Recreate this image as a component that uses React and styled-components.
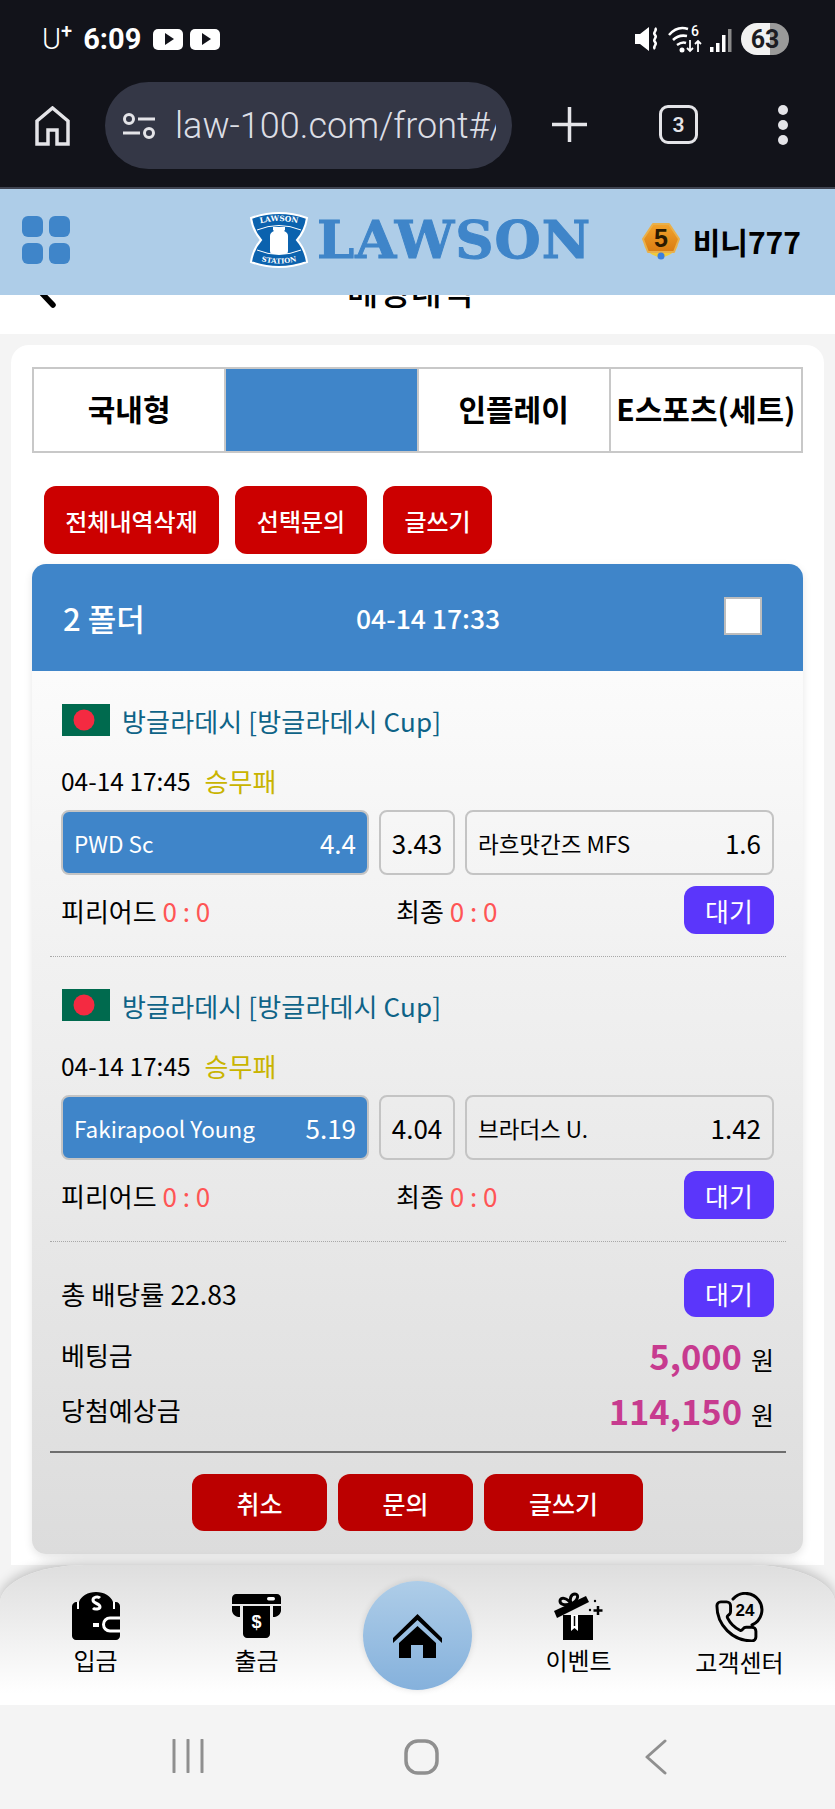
import React from 'react';
import styled, { createGlobalStyle } from 'styled-components';

const GlobalStyle = createGlobalStyle`
  html, body {
    margin: 0;
    padding: 0;
    background: #f4f4f4;
  }
  * { box-sizing: border-box; }
  body {
    font-family: "Noto Sans CJK KR", "Noto Sans", sans-serif;
    color: #000;
  }
`;

const Phone = styled.div`
  width: 835px;
  height: 1809px;
  display: flex;
  flex-direction: column;
  overflow: hidden;
`;

/* android + browser chrome */
const Chrome = styled.div`
  height: 189px;
  flex: none;
  background: #12131a;
  border-bottom: 2px solid #3f4350;
  position: relative;
  z-index: 3;
`;

const StatusBar = styled.div`
  height: 78px;
  padding: 0 46px 0 42px;
  display: flex;
  align-items: center;
  color: #fff;
`;

const Carrier = styled.span`
  font-family: "Roboto", sans-serif;
  font-size: 29px;
  font-weight: 300;
  margin-right: 11px;
  sup { font-size: 20px; line-height: 0; font-weight: 500; vertical-align: 11px; }
`;

const Clock = styled.span`
  font-family: "Roboto", sans-serif;
  font-size: 29px;
  font-weight: 700;
  margin-right: 12px;
`;

const PlayBadge = styled.div`
  width: 30px;
  height: 21px;
  border-radius: 5px;
  background: #fff;
  margin-right: 7px;
  display: flex;
  align-items: center;
  justify-content: center;
  &::after {
    content: '';
    border-left: 9px solid #12131a;
    border-top: 6px solid transparent;
    border-bottom: 6px solid transparent;
    margin-left: 2px;
  }
`;

const StatusRight = styled.div`
  margin-left: auto;
  display: flex;
  align-items: center;
  gap: 8px;
`;

const Battery = styled.div`
  width: 48px;
  height: 32px;
  border-radius: 16px;
  background: linear-gradient(90deg, #f1f1f1 0 60%, #9a9a9a 60%);
  color: #1c1c22;
  font-family: "Roboto", sans-serif;
  font-size: 25px;
  font-weight: 700;
  display: flex;
  align-items: center;
  justify-content: center;
`;

const BrowserBar = styled.div`
  height: 91px;
  padding: 4px 0 0 35px;
  display: flex;
  align-items: flex-start;
`;

const UrlBar = styled.div`
  width: 407px;
  height: 87px;
  margin-left: 35px;
  padding: 0 16px 0 17px;
  border-radius: 44px;
  background: #343746;
  display: flex;
  align-items: center;
  gap: 19px;
`;

const UrlText = styled.div`
  flex: 1;
  overflow: hidden;
  white-space: nowrap;
  font-family: "Roboto", sans-serif;
  font-size: 36px;
  font-weight: 300;
  color: #dcdee5;
`;

const BarIcon = styled.svg`
  flex: none;
  display: block;
  margin-top: ${p => p.$top}px;
  margin-left: ${p => p.$left}px;
`;

const TabCount = styled.div`
  width: 39px;
  height: 39px;
  margin: 23px 0 0 72px;
  border: 3px solid #e4e4e8;
  border-radius: 9px;
  color: #e4e4e8;
  font-family: "Roboto", sans-serif;
  font-size: 21px;
  font-weight: 600;
  display: flex;
  align-items: center;
  justify-content: center;
`;

const Dots = styled.div`
  margin: 23px 0 0 80px;
  display: flex;
  flex-direction: column;
  gap: 5px;
  span {
    width: 10px;
    height: 10px;
    border-radius: 50%;
    background: #e4e4e8;
  }
`;

/* site header */
const Header = styled.header`
  height: 106px;
  flex: none;
  background: #aecde8;
  position: relative;
  z-index: 2;
  display: flex;
  align-items: center;
  padding: 0 34px 0 22px;
`;

const MenuGrid = styled.div`
  display: grid;
  grid-template-columns: 21px 21px;
  grid-auto-rows: 21px;
  gap: 6px;
  margin-top: -5px;
  span {
    background: #3f85c9;
    border-radius: 6px;
  }
`;

const Logo = styled.div`
  display: flex;
  align-items: center;
  gap: 8px;
  margin-left: 179px;
  margin-top: -5px;
`;

const LogoWord = styled.span`
  font-family: "DejaVu Serif", serif;
  font-size: 53px;
  font-weight: 700;
  line-height: 1;
  letter-spacing: 1px;
  color: #3f85c9;
  -webkit-text-stroke: 1px #3f85c9;
`;

const UserBox = styled.div`
  margin-left: auto;
  display: flex;
  align-items: center;
  gap: 13px;
  margin-top: -3px;
`;

const UserName = styled.span`
  font-size: 30px;
  font-weight: 700;
  white-space: nowrap;
`;

/* scrolled page */
const Main = styled.main`
  flex: 1;
  min-height: 0;
  overflow: hidden;
`;

const TitleRow = styled.div`
  height: 70px;
  margin-top: -31px;
  padding: 0 0 16px 32px;
  background: #fff;
  display: flex;
  align-items: center;
`;

const BackIcon = styled.svg`
  flex: none;
  align-self: flex-start;
`;

const PageTitle = styled.h1`
  margin: 0 0 0 291px;
  font-size: 34px;
  font-weight: 500;
  line-height: 1;
  letter-spacing: 0.5px;
`;

const Card = styled.section`
  margin: 11px 11px 0;
  padding: 22px 21px 40px;
  background: #fff;
  border-radius: 18px;
`;

const Tabs = styled.div`
  height: 86px;
  display: grid;
  grid-template-columns: repeat(4, 1fr);
  border: 1px solid #c8c8c8;
`;

const Tab = styled.div`
  padding-bottom: 4px;
  border: 1px solid #c8c8c8;
  background: ${p => (p.$active ? '#3f85c9' : '#fff')};
  font-size: 30px;
  font-weight: 700;
  white-space: nowrap;
  display: flex;
  align-items: center;
  justify-content: center;
`;

const Actions = styled.div`
  margin: 33px 0 10px;
  padding-left: 12px;
  display: flex;
  gap: 16px;
`;

const RedButton = styled.button`
  height: ${p => p.$height || 68}px;
  padding: 0;
  width: ${p => p.$width}px;
  border: none;
  border-radius: 12px;
  background: ${p => (p.$dark ? '#bb0000' : '#cc0000')};
  color: #fff;
  font-family: inherit;
  font-size: ${p => p.$size || 24}px;
  font-weight: 500;
`;

const Panel = styled.div`
  border-radius: 14px;
  overflow: hidden;
  background: linear-gradient(180deg, #fff 0%, #dcdcdc 100%);
  box-shadow: 0 3px 8px rgba(0, 0, 0, 0.1);
`;

const PanelHead = styled.div`
  height: 107px;
  padding: 0 41px 0 31px;
  background: #3f85c9;
  color: #fff;
  display: flex;
  align-items: center;
`;

const FolderCount = styled.span`
  width: 293px;
  font-size: 31px;
  font-weight: 500;
`;

const HeadDate = styled.span`
  font-size: 26.5px;
  font-weight: 500;
`;

const CheckBox = styled.div`
  width: 38px;
  height: 38px;
  margin: -4px 0 0 auto;
  background: #fff;
  border: 2px solid #bdbdbd;
`;

const Match = styled.div`
  margin: 0 17px 0 18px;
  padding: 33px 12px 22px 11px;
  border-bottom: 1px dotted #a8a8a8;
  & + & { padding-top: 32px; }
`;

const League = styled.div`
  height: 32px;
  padding-left: 1px;
  display: flex;
  align-items: center;
  gap: 12px;
  color: #0e6387;
  font-size: 26px;
  letter-spacing: 0.15px;
  white-space: nowrap;
`;

const GameLine = styled.div`
  height: 32px;
  margin: 28px 0 14px;
  display: flex;
  align-items: center;
  gap: 14px;
  font-size: 24.5px;
`;

const Market = styled.span`
  color: #c9b400;
  font-size: 26px;
`;

const Odds = styled.div`
  height: 65px;
  display: grid;
  grid-template-columns: 308px 76px 309px;
  gap: 10px;
`;

const OddCell = styled.div`
  padding: 0 11px;
  border: 2px solid #c4c4c4;
  border-radius: 8px;
  background: ${p => (p.$picked ? '#3f85c9' : 'transparent')};
  color: ${p => (p.$picked ? '#fff' : '#000')};
  display: flex;
  align-items: center;
  justify-content: ${p => (p.$center ? 'center' : 'space-between')};
  white-space: nowrap;
`;

const TeamName = styled.span`
  font-size: 22.5px;
`;

const OddValue = styled.span`
  font-size: 26px;
`;

const ScoreLine = styled.div`
  margin-top: 11px;
  height: 48px;
  display: flex;
  align-items: center;
  font-size: 26px;
  white-space: nowrap;
`;

const ScoreItem = styled.span`
  width: ${p => p.$width}px;
`;

const Red = styled.span`
  color: #ff5555;
`;

const WaitButton = styled.div`
  width: 90px;
  height: 48px;
  margin-left: auto;
  border-radius: 12px;
  background: #5b36fb;
  color: #fff;
  font-size: 26px;
  display: flex;
  align-items: center;
  justify-content: center;
`;

const Summary = styled.div`
  margin: 0 17px 0 18px;
`;

const SummaryTop = styled.div`
  margin-top: 27px;
  padding: 0 12px 0 11px;
  display: flex;
  align-items: center;
  font-size: 26.5px;
`;

const MoneyList = styled.div`
  margin-top: 10px;
  padding: 0 12px 14px 11px;
  border-bottom: 2px solid #6e6e6e;
`;

const MoneyRow = styled.div`
  height: 55px;
  display: flex;
  align-items: center;
  justify-content: space-between;
  font-size: 26px;
`;

const Amount = styled.span`
  display: flex;
  align-items: baseline;
  gap: 9px;
  font-size: 25px;
  strong {
    color: #c73b8f;
    font-size: 34.5px;
    font-weight: 700;
  }
`;

const BottomActions = styled.div`
  padding: 21px 0 23px;
  display: flex;
  justify-content: center;
  gap: 11px;
`;

/* bottom nav */
const BottomNav = styled.nav`
  height: 140px;
  flex: none;
  position: relative;
  z-index: 2;
  padding: 0 15px;
  display: grid;
  grid-template-columns: repeat(5, 161px);
  border-radius: 84px 84px 0 0 / 38px 38px 0 0;
  background: linear-gradient(180deg, #dedede 0%, #fff 92%);
  box-shadow: 0 -3px 12px rgba(0, 0, 0, 0.22);
`;

const NavItem = styled.div`
  padding-top: 27px;
  display: flex;
  flex-direction: column;
  align-items: center;
  gap: 2px;
  font-size: 24px;
  line-height: 36px;
  white-space: nowrap;
`;

const HomeCircle = styled.div`
  width: 109px;
  height: 109px;
  margin: 16px auto 0;
  border-radius: 50%;
  background: linear-gradient(180deg, #aecde8 0%, #85b1dc 100%);
  box-shadow: 0 0 6px rgba(0, 0, 0, 0.12);
  display: flex;
  align-items: center;
  justify-content: center;
`;

const SystemNav = styled.div`
  height: 104px;
  flex: none;
  background: #f4f4f4;
  position: relative;
  z-index: 2;
`;

const SystemIcons = styled.div`
  padding: 34px 0 0 172px;
  display: flex;
  align-items: flex-start;
`;

const SystemIcon = styled.svg`
  margin-left: ${p => p.$left || 0}px;
`;

const WalletIcon = () => (
  <svg width="48" height="48" viewBox="0 0 48 48">
    <path d="M5 10h2C9 4 16 0 24 0s15 4 17 10h3c2 0 4 2 4 4v30c0 2-2 4-4 4H4c-2 0-4-2-4-4V15c0-3 2-5 5-5z" fill="#000" />
    <path d="M6 10v7M42 10v7" stroke="#fff" strokeWidth="2" />
    <path d="M28 6c-2-2-7-1-7 2 0 4 7 3 7 7 0 2-5 3-7 1" fill="none" stroke="#fff" strokeWidth="3" />
    <path d="M49 26H38a6.500 6.500 0 0 0 0 13h11" fill="#000" stroke="#fff" strokeWidth="3" />
    <rect x="21" y="31" width="6" height="4" fill="#fff" />
  </svg>
);

const AtmIcon = () => (
  <svg width="50" height="48" viewBox="0 0 50 48">
    <path d="M4 2h41c2 0 4 2 4 4v6H0V6c0-2 2-4 4-4z" fill="#000" />
    <rect x="35" y="5" width="8" height="3.500" rx="1.700" fill="#fff" />
    <path d="M0 14h8v11c-4 0-7-2-8-6zM49 14h-8v11c4 0 7-2 8-6z" fill="#000" />
    <path d="M11 14h27v28c0 2-2 4-4 4H15c-2 0-4-2-4-4z" fill="#000" />
    <text x="24.500" y="36" textAnchor="middle" fontFamily="Liberation Sans" fontSize="18" fontWeight="700" fill="#fff">$</text>
  </svg>
);

const GiftIcon = () => (
  <svg width="50" height="48" viewBox="0 0 50 48">
    <path d="M9 23h30v25H9z" fill="#000" />
    <path d="M17 23h7v16l-3.500-3-3.500 3z" fill="#fff" />
    <path d="M20.500 24v10" stroke="#000" strokeWidth="1.500" />
    <path d="M0 19 32 4l3 6L3 26z" fill="#000" />
    <path d="M17 12C10 14 6 12 6 9c0-4 7-4 11 3zm0 0c-2-5 0-10 4-10s4 6-4 10z" fill="none" stroke="#000" strokeWidth="3" />
    <path d="M44 14v9M39.500 18.500h9" stroke="#000" strokeWidth="2.500" />
    <circle cx="41" cy="9" r="1.200" fill="#000" />
    <circle cx="36" cy="18" r="1.200" fill="#000" />
  </svg>
);

const SupportIcon = () => (
  <svg width="50" height="50" viewBox="0 0 50 50">
    <g transform="translate(-2 6) scale(1.95)">
      <path d="M13.832 16.568a1 1 0 0 0 1.213-.303l.355-.465A2 2 0 0 1 17 15h3a2 2 0 0 1 2 2v3a2 2 0 0 1-2 2A18 18 0 0 1 2 4a2 2 0 0 1 2-2h3a2 2 0 0 1 2 2v3a2 2 0 0 1-.8 1.600l-.468.351a1 1 0 0 0-.292 1.233 14 14 0 0 0 6.392 6.384" fill="none" stroke="#000" strokeWidth="1.500" />
    </g>
    <path d="M18 7A16.500 16.500 0 1 1 37 33" fill="none" stroke="#000" strokeWidth="3" strokeLinecap="round" />
    <text x="30" y="24" textAnchor="middle" fontFamily="Liberation Sans" fontSize="17" fontWeight="700" fill="#000">24</text>
  </svg>
);

const HomeIcon = () => (
  <svg width="49" height="44" viewBox="0 0 49 44">
    <path d="M24.500 0 49 24v5L24.500 6 0 29v-5z" fill="#000" />
    <path d="M24.500 12 43 29v15H30V31H18v13H6V29z" fill="#000" />
  </svg>
);

const Flag = () => (
  <svg width="48" height="32" viewBox="0 0 48 32">
    <rect width="48" height="32" fill="#006a4e" />
    <ellipse cx="22" cy="16" rx="10.500" ry="10.500" fill="#f42a41" />
  </svg>
);

const Shield = () => (
  <svg width="60" height="60" viewBox="0 0 60 60">
    <path d="M2 8Q30-2 58 8 56 21 48 30q8 9 10 22Q30 62 2 52 4 39 12 30 4 21 2 8z" fill="#0b62ae" stroke="#fff" strokeWidth="2" />
    <path d="M8 20Q30 11 52 20M8 40Q30 49 52 40" fill="none" stroke="#fff" strokeWidth="1" />
    <path d="M24 17h12v3l-1 1c3 1 4 3 4 5v15c0 2-1 3-3 3H24c-2 0-3-1-3-3V26c0-2 1-4 4-5l-1-1z" fill="#fff" />
    <path id="shield-top" d="M5 15Q30 7 55 15" fill="none" />
    <path id="shield-bottom" d="M5 49Q30 58 55 49" fill="none" />
    <text fontFamily="DejaVu Serif" fontSize="7.500" fontWeight="700" fill="#fff">
      <textPath href="#shield-top" startOffset="50%" textAnchor="middle">LAWSON</textPath>
    </text>
    <text fontFamily="DejaVu Serif" fontSize="7" fontWeight="700" fill="#fff">
      <textPath href="#shield-bottom" startOffset="50%" textAnchor="middle">STATION</textPath>
    </text>
  </svg>
);

const LevelBadge = () => (
  <svg width="38" height="40" viewBox="0 0 38 40">
    <defs>
      <linearGradient id="badge-fill" x1="0" y1="0" x2="0" y2="1">
        <stop offset="0" stopColor="#f2a32c" />
        <stop offset="1" stopColor="#d97c12" />
      </linearGradient>
    </defs>
    <path d="M2 24c3 8 10 11 17 13 7-2 14-5 17-13l-6 7H8z" fill="#f0cb3c" />
    <path d="M11 3h16l10 15-5 13H6L1 18z" fill="url(#badge-fill)" stroke="#e9b04a" strokeWidth="2" strokeLinejoin="round" />
    <circle cx="19" cy="35" r="3.500" fill="#3b7fe0" />
    <text x="19" y="26" textAnchor="middle" fontFamily="Liberation Sans" fontSize="25" fontWeight="700" fill="#2b1a00">5</text>
  </svg>
);

const games = [
  { home: 'PWD Sc', homeOdd: '4.4', draw: '3.43', away: '라흐맛간즈 MFS', awayOdd: '1.6' },
  { home: 'Fakirapool Young', homeOdd: '5.19', draw: '4.04', away: '브라더스 U.', awayOdd: '1.42' },
];

const App = () => (
  <Phone>
    <GlobalStyle />
    <Chrome>
      <StatusBar>
        <Carrier>U<sup>+</sup></Carrier>
        <Clock>6:09</Clock>
        <PlayBadge />
        <PlayBadge />
        <StatusRight>
          <svg width="26" height="28" viewBox="0 0 26 28">
            <path d="M1 9h5l9-7v24l-9-7H1z" fill="#fff" />
            <path d="M21 3c3 3-3 4 0 7s-3 4 0 7-3 4 0 7" fill="none" stroke="#fff" strokeWidth="2.500" />
          </svg>
          <svg width="34" height="30" viewBox="0 0 34 30">
            <path d="M1 11C7 4 14 3 20 5M5 16c4-4 9-5 14-4M9 21c3-2 6-3 9-2" fill="none" stroke="#fff" strokeWidth="2.500" />
            <circle cx="14" cy="26" r="2.500" fill="#fff" />
            <text x="27" y="12" textAnchor="middle" fontFamily="Roboto" fontSize="14" fontWeight="500" fill="#fff">6</text>
            <path d="M22 16v11M19 24l3 3 3-3M30 28V17M27 20l3-3 3 3" fill="none" stroke="#fff" strokeWidth="1.800" />
          </svg>
          <svg width="23" height="28" viewBox="0 0 23 28">
            <rect x="0" y="22" width="3.500" height="5" fill="#fff" />
            <rect x="6" y="18" width="3.500" height="9" fill="#fff" />
            <rect x="12" y="10" width="3.500" height="17" fill="#fff" />
            <rect x="18" y="4" width="3.500" height="23" fill="#8a8a8a" />
          </svg>
          <Battery>63</Battery>
        </StatusRight>
      </StatusBar>
      <BrowserBar>
        <BarIcon $top={24} $left={0} width="35" height="40" viewBox="0 0 35 40">
          <path d="M2 38V15L17.500 2 33 15v23H22V24H13v14z" fill="none" stroke="#e4e4e8" strokeWidth="3.500" strokeLinejoin="miter" />
        </BarIcon>
        <UrlBar>
          <svg width="34" height="26" viewBox="0 0 34 26">
            <circle cx="7" cy="6" r="4.500" fill="none" stroke="#e4e4e8" strokeWidth="3" />
            <path d="M16 6h17M1 20h17" stroke="#e4e4e8" strokeWidth="3" />
            <circle cx="27" cy="20" r="4.500" fill="none" stroke="#e4e4e8" strokeWidth="3" />
          </svg>
          <UrlText>law-100.com/front#/</UrlText>
        </UrlBar>
        <BarIcon $top={25} $left={40} width="35" height="35" viewBox="0 0 35 35">
          <path d="M17.500 0v35M0 17.500h35" stroke="#e4e4e8" strokeWidth="3.500" />
        </BarIcon>
        <TabCount>3</TabCount>
        <Dots><span /><span /><span /></Dots>
      </BrowserBar>
    </Chrome>

    <Header>
      <MenuGrid><span /><span /><span /><span /></MenuGrid>
      <Logo>
        <Shield />
        <LogoWord>LAWSON</LogoWord>
      </Logo>
      <UserBox>
        <LevelBadge />
        <UserName>비니777</UserName>
      </UserBox>
    </Header>

    <Main>
      <TitleRow>
        <BackIcon width="24" height="44" viewBox="0 0 24 44">
          <path d="M21 3 3 22l18 19" fill="none" stroke="#000" strokeWidth="5.500" strokeLinecap="round" />
        </BackIcon>
        <PageTitle>베팅내역</PageTitle>
      </TitleRow>
      <Card>
        <Tabs>
          <Tab>국내형</Tab>
          <Tab $active />
          <Tab>인플레이</Tab>
          <Tab>E스포츠(세트)</Tab>
        </Tabs>
        <Actions>
          <RedButton $width={175}>전체내역삭제</RedButton>
          <RedButton $width={132}>선택문의</RedButton>
          <RedButton $width={109}>글쓰기</RedButton>
        </Actions>
        <Panel>
          <PanelHead>
            <FolderCount>2 폴더</FolderCount>
            <HeadDate>04-14 17:33</HeadDate>
            <CheckBox />
          </PanelHead>
          {games.map(g => (
            <Match key={g.home}>
              <League>
                <Flag />
                방글라데시 [방글라데시 Cup]
              </League>
              <GameLine>
                04-14 17:45
                <Market>승무패</Market>
              </GameLine>
              <Odds>
                <OddCell $picked>
                  <TeamName>{g.home}</TeamName>
                  <OddValue>{g.homeOdd}</OddValue>
                </OddCell>
                <OddCell $center>
                  <OddValue>{g.draw}</OddValue>
                </OddCell>
                <OddCell>
                  <TeamName>{g.away}</TeamName>
                  <OddValue>{g.awayOdd}</OddValue>
                </OddCell>
              </Odds>
              <ScoreLine>
                <ScoreItem $width={335}>피리어드 <Red>0 : 0</Red></ScoreItem>
                <ScoreItem>최종 <Red>0 : 0</Red></ScoreItem>
                <WaitButton>대기</WaitButton>
              </ScoreLine>
            </Match>
          ))}
          <Summary>
            <SummaryTop>
              총 배당률 22.83
              <WaitButton>대기</WaitButton>
            </SummaryTop>
            <MoneyList>
              <MoneyRow>
                베팅금
                <Amount><strong>5,000</strong> 원</Amount>
              </MoneyRow>
              <MoneyRow>
                당첨예상금
                <Amount><strong>114,150</strong> 원</Amount>
              </MoneyRow>
            </MoneyList>
          </Summary>
          <BottomActions>
            <RedButton $dark $size={25} $height={57} $width={135}>취소</RedButton>
            <RedButton $dark $size={25} $height={57} $width={135}>문의</RedButton>
            <RedButton $dark $size={25} $height={57} $width={159}>글쓰기</RedButton>
          </BottomActions>
        </Panel>
      </Card>
    </Main>

    <BottomNav>
      <NavItem><WalletIcon />입금</NavItem>
      <NavItem><AtmIcon />출금</NavItem>
      <HomeCircle><HomeIcon /></HomeCircle>
      <NavItem><GiftIcon />이벤트</NavItem>
      <NavItem><SupportIcon />고객센터</NavItem>
    </BottomNav>

    <SystemNav>
      <SystemIcons>
        <SystemIcon width="32" height="34" viewBox="0 0 32 34">
          <path d="M2 1v32M16 1v32M30 1v32" stroke="#8f8f8f" strokeWidth="3" strokeLinecap="round" />
        </SystemIcon>
        <SystemIcon $left={200} width="35" height="36" viewBox="0 0 35 36">
          <rect x="2" y="2" width="31" height="32" rx="12" fill="none" stroke="#8f8f8f" strokeWidth="3.500" />
        </SystemIcon>
        <SystemIcon $left={205} width="24" height="36" viewBox="0 0 24 36">
          <path d="M21 2 3 18l18 16" fill="none" stroke="#8f8f8f" strokeWidth="3" strokeLinecap="round" strokeLinejoin="round" />
        </SystemIcon>
      </SystemIcons>
    </SystemNav>
  </Phone>
);

export default App;
